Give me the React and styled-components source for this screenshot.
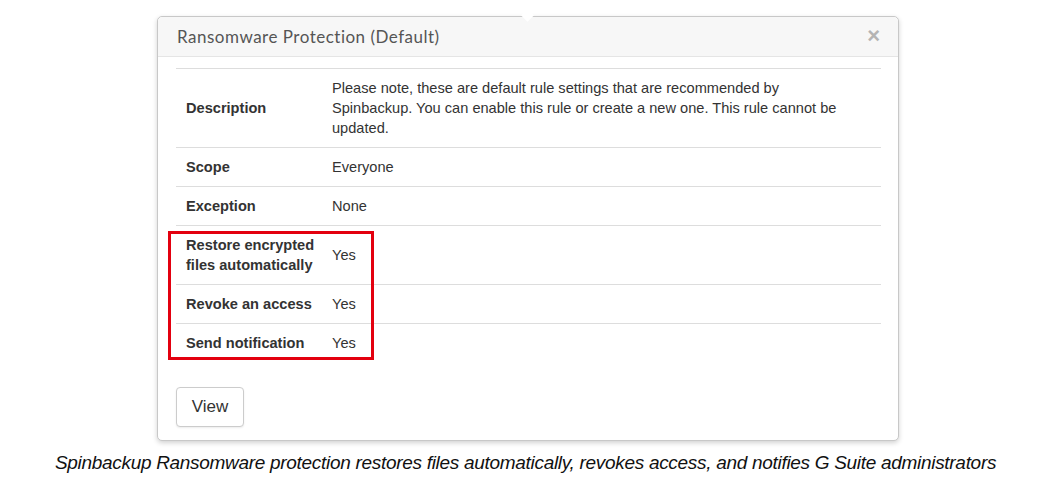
import React from 'react'
import styled, { createGlobalStyle } from 'styled-components'

const GlobalStyle = createGlobalStyle`
  html, body {
    margin: 0;
    padding: 0;
    background: #fff;
  }
  body {
    font-family: "Liberation Sans", Arial, sans-serif;
    color: #333;
  }
`;

const Page = styled.div`
  display: flex;
  flex-direction: column;
  padding-top: 16px;
  width: 1051px;
  height: 499px;
  box-sizing: border-box;
  overflow: hidden;
`;

const Modal = styled.div`
  position: relative;
  margin-left: 157px;
  width: 740px;
  border: 1px solid #c8c8c8;
  border-radius: 5px;
  box-shadow: 0 2px 5px rgba(0, 0, 0, 0.18);
  background: #fff;

  &::before {
    content: '';
    position: absolute;
    left: 365px;
    top: -6px;
    width: 9px;
    height: 9px;
    background: #fff;
    transform: rotate(45deg);
  }
`;

const Header = styled.div`
  display: flex;
  align-items: center;
  justify-content: space-between;
  height: 39px;
  padding: 0 18px 0 19px;
  background: #f7f7f7;
  border-bottom: 1px solid #e5e5e5;
  border-radius: 5px 5px 0 0;
`;

const Title = styled.h4`
  margin: 0;
  font-family: Lato, "Open Sans", sans-serif;
  font-weight: 400;
  font-size: 17px;
  color: #555;
  letter-spacing: 0.5px;
`;

const Close = styled.span`
  font-family: "Liberation Sans", Arial, sans-serif;
  font-size: 22px;
  font-weight: 700;
  color: #b4b4b4;
  line-height: 1;
  margin-top: -2px;
`;

const Body = styled.div`
  padding: 11px 17px 13px 18px;
`;

const TableWrap = styled.div`
  position: relative;
`;

const Table = styled.table`
  width: 100%;
  border-collapse: collapse;
  font-size: 14.6px;
  line-height: 20px;
`;

const Row = styled.tr`
  border-top: 1px solid #ddd;
`;

const Label = styled.th`
  width: 134px;
  padding: 9px 2px 9px 10px;
  text-align: left;
  vertical-align: middle;
  font-weight: 700;
  color: #333;
`;

const Value = styled.td`
  padding: 9px 28px 9px 10px;
  vertical-align: middle;
  color: #333;
`;

const Highlight = styled.div`
  position: absolute;
  left: -8px;
  top: 163px;
  width: 200px;
  height: 123px;
  border: 3px solid #e3000f;
  pointer-events: none;
`;

const ViewButton = styled.button`
  margin-top: 25px;
  width: 68px;
  height: 40px;
  background: #fff;
  border: 1px solid #ccc;
  border-radius: 4px;
  box-shadow: 0 1px 2px rgba(0, 0, 0, 0.08);
  font-family: "Liberation Sans", Arial, sans-serif;
  font-size: 17px;
  color: #333;
  cursor: pointer;
`;

const Caption = styled.p`
  margin: 11px 0 0;
  text-align: center;
  font-family: "Liberation Sans", Arial, sans-serif;
  font-style: italic;
  font-size: 19px;
  color: #111;
  letter-spacing: -0.3px;
`;

const rows = [
  {
    label: 'Description',
    value:
      'Please note, these are default rule settings that are recommended by Spinbackup. You can enable this rule or create a new one. This rule cannot be updated.',
  },
  { label: 'Scope', value: 'Everyone' },
  { label: 'Exception', value: 'None' },
  { label: 'Restore encrypted files automatically', value: 'Yes' },
  { label: 'Revoke an access', value: 'Yes' },
  { label: 'Send notification', value: 'Yes' },
];

export default function App() {
  return (
    <>
      <GlobalStyle />
      <Page>
        <Modal>
          <Header>
            <Title>Ransomware Protection (Default)</Title>
            <Close>×</Close>
          </Header>
          <Body>
            <TableWrap>
              <Table>
                <tbody>
                  {rows.map((row) => (
                    <Row key={row.label}>
                      <Label>{row.label}</Label>
                      <Value>{row.value}</Value>
                    </Row>
                  ))}
                </tbody>
              </Table>
              <Highlight />
            </TableWrap>
            <ViewButton type="button">View</ViewButton>
          </Body>
        </Modal>
        <Caption>
          Spinbackup Ransomware protection restores files automatically, revokes access, and notifies G Suite administrators
        </Caption>
      </Page>
    </>
  );
}
